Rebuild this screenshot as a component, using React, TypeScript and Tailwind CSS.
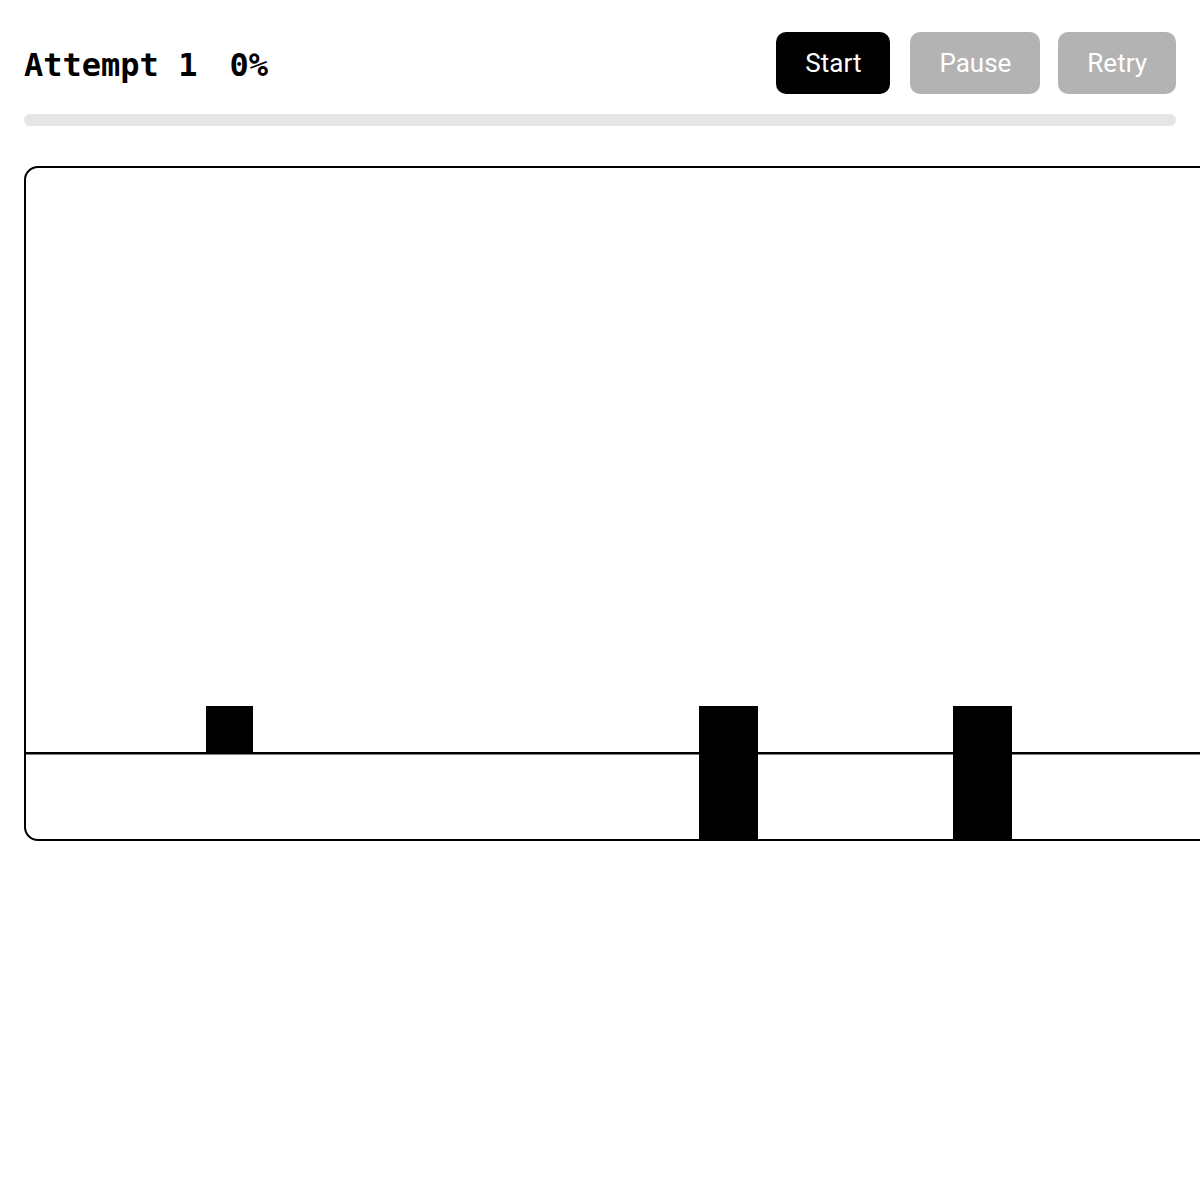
import React from 'react';

interface Obstacle {
  x: number;
  w: number;
}

// canvas coords are inside the 2px border, 1200x675
const GROUND_Y = 585;
const obstacles: Obstacle[] = [
  { x: 673, w: 59 },
  { x: 927, w: 59 },
];

const GameCanvas: React.FC = () => (
  <div className="mt-10 w-[1204px] shrink-0 rounded-[14px] border-2 border-black bg-white overflow-hidden">
    <svg width={1200} height={671} viewBox="0 0 1200 671" className="block">
      {/* ground */}
      <rect x={0} y={GROUND_Y - 1} width={1200} height={2.5} fill="#000" />
      {/* player */}
      <rect x={180} y={538} width={47} height={GROUND_Y - 538} fill="#000" />
      {/* obstacles */}
      {obstacles.map((o, i) => (
        <rect key={i} x={o.x} y={538} width={o.w} height={671 - 538} fill="#000" />
      ))}
    </svg>
  </div>
);

export default function App() {
  const attempt = 1;
  const progress = 0;

  return (
    <div className="w-[1200px] h-[1200px] overflow-hidden bg-white px-6 pt-8">
      <div className="flex items-center justify-between">
        <h1
          className="mt-1 flex gap-8 text-[32px] font-bold text-black"
          style={{ fontFamily: '"DejaVu Sans Mono", "Liberation Mono", monospace' }}
        >
          <span>Attempt {attempt}</span>
          <span>{progress}%</span>
        </h1>
        <div
          className="flex items-center"
          style={{ fontFamily: 'Roboto, "Liberation Sans", sans-serif' }}
        >
          <button className="mr-5 h-[62px] rounded-[10px] bg-black px-[29px] text-[26px] text-white">Start</button>
          <button className="mr-[18px] h-[62px] rounded-[10px] bg-[#b3b3b3] px-[29px] text-[26px] text-white" disabled>
            Pause
          </button>
          <button className="h-[62px] rounded-[10px] bg-[#b3b3b3] px-[29px] text-[26px] text-white" disabled>
            Retry
          </button>
        </div>
      </div>

      {/* progress */}
      <div className="mt-5 h-3 w-full rounded-full bg-[#e6e6e6]">
        <div className="h-3 rounded-full bg-black" style={{ width: `${progress}%` }} />
      </div>

      <GameCanvas />
    </div>
  );
}
